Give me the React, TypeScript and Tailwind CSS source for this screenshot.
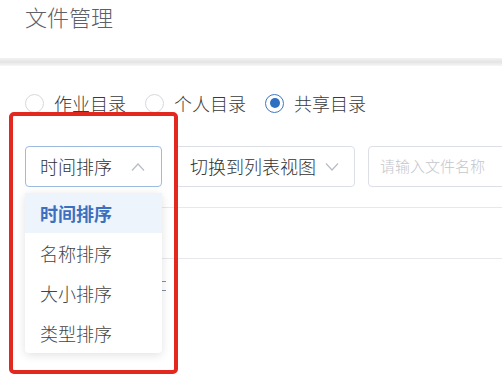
import { useState } from 'react';

const FONT = '"Noto Sans CJK SC", "Noto Sans", sans-serif';

const dirs = ['作业目录', '个人目录', '共享目录'];
const sorts = ['时间排序', '名称排序', '大小排序', '类型排序'];

function Chevron({ up }: { up?: boolean }) {
  return (
    <svg width="14" height="8" viewBox="0 0 14 8" fill="none" className="shrink-0">
      <path
        d={up ? 'M1 7.5 L7 1 L13 7.5' : 'M1 0.5 L7 7 L13 0.5'}
        stroke="#b8bcc4"
        strokeWidth="1.2"
      />
    </svg>
  );
}

export default function App() {
  const [dir, setDir] = useState(2);
  const [sort, setSort] = useState(0);

  return (
    <div
      className="relative w-[502px] h-[385px] overflow-hidden bg-white font-light"
      style={{ fontFamily: FONT }}
    >
      {/* Header */}
      <div className="h-[58px] pl-[25px]">
        <h1 className="text-[22px] leading-[32px] text-[#5c6068] font-light">文件管理</h1>
      </div>
      <div className="h-[8px] bg-gradient-to-b from-[#f2f2f2] via-[#e4e4e4] to-[#f6f6f6]" />

      <div className="pl-[25px]">
        {/* Directory radios */}
        <div className="mt-[26px] h-[22px] flex items-center gap-[19px]">
          {dirs.map((d, i) => (
            <button key={d} className="flex items-center" onClick={() => setDir(i)}>
              {dir === i ? (
                <span className="w-[19px] h-[19px] rounded-full border border-[#3a78c9] flex items-center justify-center">
                  <span className="w-[10px] h-[10px] rounded-full bg-[#2f6fc2]" />
                </span>
              ) : (
                <span className="w-[19px] h-[19px] rounded-full border border-[#d6d9df]" />
              )}
              <span className="ml-[10px] text-[18px] leading-[22px] text-[#3a3a3a]">{d}</span>
            </button>
          ))}
        </div>

        {/* Filters */}
        <div className="mt-[32px] h-[41px] flex gap-[13px]">
          <div className="w-[137px] shrink-0 rounded-[4px] border border-[#9dbbe0] pl-[14px] pr-[16px] flex items-center justify-between">
            <span className="text-[18px] text-[#333]">{sorts[sort]}</span>
            <Chevron up />
          </div>
          <div className="w-[180px] shrink-0 rounded-[4px] border border-[#dcdfe6] pl-[14px] pr-[15px] flex items-center justify-between">
            <span className="text-[18px] text-[#333]">切换到列表视图</span>
            <Chevron />
          </div>
          <div className="w-[180px] shrink-0 rounded-[4px] border border-[#dcdfe6] pl-[11px] flex items-center">
            <input
              placeholder="请输入文件名称"
              className="w-full outline-none text-[15px] font-light placeholder:text-[#c3c6cc] bg-transparent"
            />
          </div>
        </div>

        {/* Table area */}
        <div className="mt-[20px] h-[52px] border-t border-b border-[#e6e8ec]" />
        <div className="mt-[22px] ml-[137px] w-[4px] h-[10px] border-t border-b border-[#7d8ea8]" />
      </div>

      {/* Sort dropdown */}
      <div className="absolute left-[25px] top-[193px] w-[137px] bg-white rounded-[4px] shadow-[0_2px_10px_rgba(0,0,0,0.12)]">
        {sorts.map((s, i) => (
          <div
            key={s}
            onClick={() => setSort(i)}
            className={
              i === sort
                ? 'h-[40px] flex items-center px-[15px] text-[18px] font-bold text-[#3d6fbf] bg-[#edf4fc]'
                : 'h-[40px] flex items-center px-[15px] text-[18px] text-[#444]'
            }
          >
            {s}
          </div>
        ))}
      </div>

      {/* Annotation outline */}
      <div className="absolute left-[9px] top-[112px] w-[169px] h-[262px] border-[4px] border-[#e3291f] rounded-[5px] pointer-events-none" />
    </div>
  );
}
